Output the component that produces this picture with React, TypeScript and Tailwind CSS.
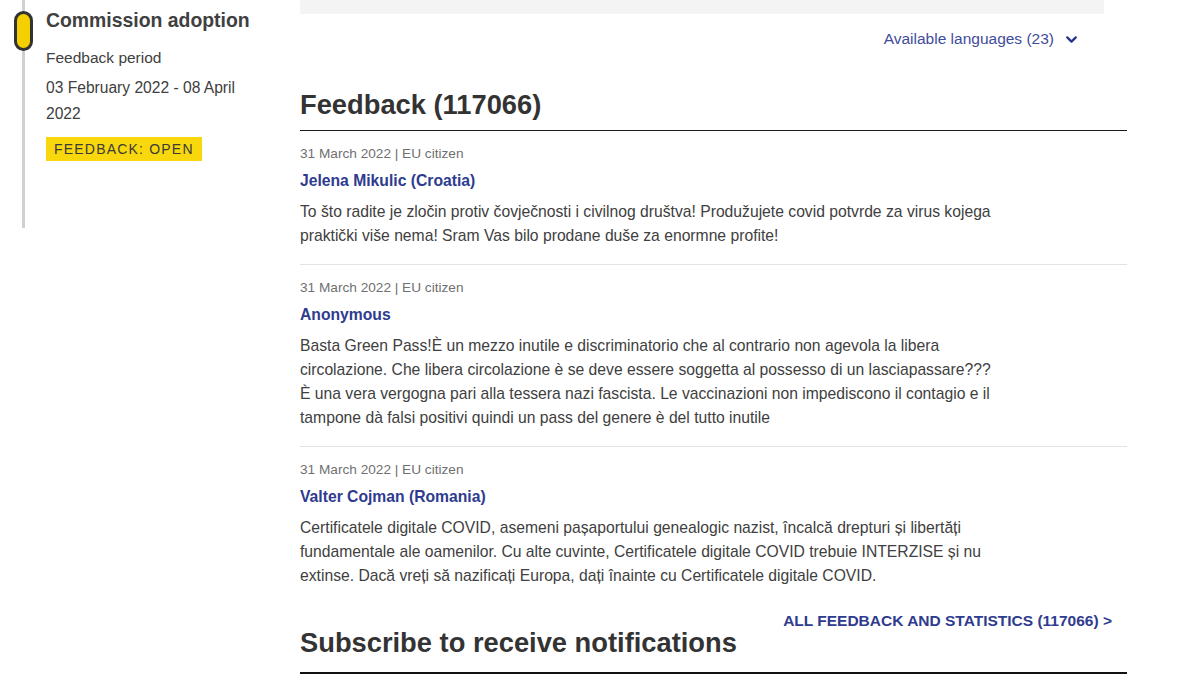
import React from "react";
import { ChevronDown } from "lucide-react";

const font = { fontFamily: '"Liberation Sans", Arial, sans-serif' };

type Entry = { name: string; lines: string[] };

const entries: Entry[] = [
  {
    name: "Jelena Mikulic (Croatia)",
    lines: [
      "To što radite je zločin protiv čovječnosti i civilnog društva! Produžujete covid potvrde za virus kojega",
      "praktički više nema! Sram Vas bilo prodane duše za enormne profite!",
    ],
  },
  {
    name: "Anonymous",
    lines: [
      "Basta Green Pass!È un mezzo inutile e discriminatorio che al contrario non agevola la libera",
      "circolazione. Che libera circolazione è se deve essere soggetta al possesso di un lasciapassare???",
      "È una vera vergogna pari alla tessera nazi fascista. Le vaccinazioni non impediscono il contagio e il",
      "tampone dà falsi positivi quindi un pass del genere è del tutto inutile",
    ],
  },
  {
    name: "Valter Cojman (Romania)",
    lines: [
      "Certificatele digitale COVID, asemeni pașaportului genealogic nazist, încalcă drepturi și libertăți",
      "fundamentale ale oamenilor. Cu alte cuvinte, Certificatele digitale COVID trebuie INTERZISE și nu",
      "extinse. Dacă vreți să nazificați Europa, dați înainte cu Certificatele digitale COVID.",
    ],
  },
];

export default function App() {
  return (
    <div className="w-[1200px] h-[681px] overflow-hidden bg-white flex" style={font}>
      {/* Left timeline column */}
      <div className="w-[300px] shrink-0 flex items-start">
        <div className="relative ml-[22px] w-[3px] h-[228px] bg-[#d0d0d0]">
          <div className="absolute left-[-8px] top-[11px] w-[19px] h-[40px] rounded-full border-[3px] border-[#333333] bg-[#f5d000]" />
        </div>
        <div className="ml-[21px] w-[220px] text-[#404040]">
          <div className="mt-[8px] text-[19.4px] leading-[24px] font-bold">Commission adoption</div>
          <div className="mt-[13px] text-[15.5px] leading-[26px]">Feedback period</div>
          <div className="mt-[4px] text-[15.6px] leading-[26px]">03 February 2022 - 08 April 2022</div>
          <div className="mt-[10px] inline-flex h-[24px] items-center px-[8px] bg-[#f8d80c] text-[14px] tracking-[1.2px] text-[#3a3a3a]">
            FEEDBACK: OPEN
          </div>
        </div>
      </div>

      {/* Main column */}
      <div className="w-[827px] shrink-0">
        <div className="w-[804px] h-[14px] bg-[#f4f4f4]" />
        <div className="mt-[15px] flex justify-end pr-[47px]">
          <div className="flex items-center gap-[9px] text-[15.5px] leading-[20px] text-[#3f4c9c]">
            <span>Available languages (23)</span>
            <ChevronDown size={17} strokeWidth={3.2} className="text-[#26358a]" />
          </div>
        </div>

        <h2 className="mt-[40px] pb-[9px] border-b border-[#1a1a1a] text-[27.3px] leading-[32px] font-bold text-[#333333]">
          Feedback (117066)
        </h2>

        {entries.map((e, i) => (
          <div
            key={i}
            className={
              i < entries.length - 1
                ? "pt-[13px] pb-[16px] border-b border-[#e3e3e3]"
                : "pt-[13px]"
            }
          >
            <div className="text-[13.65px] leading-[20px] text-[#707070]">31 March 2022 | EU citizen</div>
            <div className="mt-[7px] text-[15.7px] leading-[20px] font-bold text-[#2e3b8e]">{e.name}</div>
            <div className="mt-[9px] text-[15.7px] leading-[24px] text-[#404040] whitespace-nowrap">
              {e.lines.map((l, j) => (
                <div key={j}>{l}</div>
              ))}
            </div>
          </div>
        ))}

        <div className="mt-[23px] flex justify-between items-start border-b-2 border-[#111111] pb-[13px]">
          <h2 className="mt-[16px] text-[27.3px] leading-[32px] font-bold text-[#333333]">
            Subscribe to receive notifications
          </h2>
          <div className="mr-[15px] text-[15.5px] leading-[20px] font-bold text-[#2e3b8e]">
            ALL FEEDBACK AND STATISTICS (117066) &gt;
          </div>
        </div>
      </div>
    </div>
  );
}
